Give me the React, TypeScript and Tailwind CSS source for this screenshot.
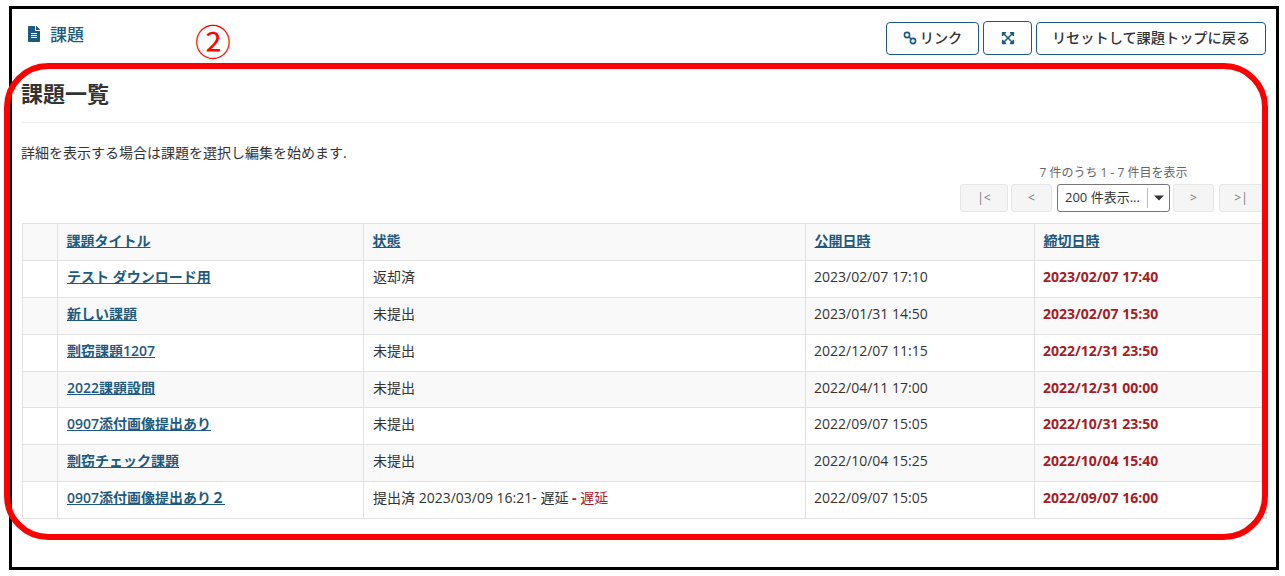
import React from 'react';
import { FaExpandArrowsAlt, FaFileAlt } from 'react-icons/fa';
import { IoMdArrowDropdown } from 'react-icons/io';

const rows = [
  { title: 'テスト ダウンロード用', status: '返却済', open: '2023/02/07 17:10', due: '2023/02/07 17:40' },
  { title: '新しい課題', status: '未提出', open: '2023/01/31 14:50', due: '2023/02/07 15:30' },
  { title: '剽窃課題1207', status: '未提出', open: '2022/12/07 11:15', due: '2022/12/31 23:50' },
  { title: '2022課題設問', status: '未提出', open: '2022/04/11 17:00', due: '2022/12/31 00:00' },
  { title: '0907添付画像提出あり', status: '未提出', open: '2022/09/07 15:05', due: '2022/10/31 23:50' },
  { title: '剽窃チェック課題', status: '未提出', open: '2022/10/04 15:25', due: '2022/10/04 15:40' },
  { title: '0907添付画像提出あり２', status: '提出済 2023/03/09 16:21- 遅延', late: true, open: '2022/09/07 15:05', due: '2022/09/07 16:00' },
];

function PagerButton({ label, width }: { label: string; width: string }) {
  return (
    <button className={`h-[28px] ${width} bg-[#f5f5f5] border border-[#e6e6e6] rounded-[3px] text-[12px] text-[#777]`}>
      {label}
    </button>
  );
}

export default function App() {
  return (
    <div className="relative w-[1285px] h-[576px] bg-white pl-[9px] pt-[6px] text-[#333] font-['Open_Sans','Noto_Sans_CJK_JP',sans-serif] overflow-hidden">
      <div className="w-[1270px] h-[564px] border-[3px] border-black px-[10px]">
        {/* ツールバー */}
        <div className="flex justify-between h-[46px] pt-[12px]">
          <div className="flex items-start gap-[9px] pl-[4px] pt-[3px] text-[17px] font-medium text-[#1d5a7d]">
            <FaFileAlt className="mt-[2px]" size={16} />
            <span className="leading-[22px] -ml-px">課題</span>
          </div>
          <div className="flex items-start gap-[4px] text-[14.2px] text-[#333]">
            <button className="mt-[1px] flex items-center justify-center gap-[3px] w-[93px] h-[33px] pb-[2px] border border-[#1d5a7d] rounded-[4px] font-medium">
              <svg width="14" height="14" viewBox="0 0 14 14" fill="none" stroke="#1d5a7d" strokeWidth="1.6">
                <circle cx="4" cy="4" r="2.6" />
                <circle cx="10" cy="10" r="2.6" />
                <path d="M6 6l2 2" />
              </svg>
              リンク
            </button>
            <button className="flex items-center justify-center w-[49px] h-[34px] border border-[#1d5a7d] rounded-[4px]">
              <FaExpandArrowsAlt size={14} className="text-[#1d5a7d]" />
            </button>
            <button className="mt-[1px] w-[230px] h-[33px] pb-[2px] border border-[#1d5a7d] rounded-[4px] font-medium">
              リセットして課題トップに戻る
            </button>
          </div>
        </div>

        <h2 className="mt-[23px] -ml-px text-[22px] leading-[30px] font-bold">課題一覧</h2>
        <div className="mt-[14px] border-t border-[#eeeeee]" />
        <p className="mt-[20px] -ml-px text-[14px] leading-[20px]">詳細を表示する場合は課題を選択し編集を始めます.</p>

        {/* ページャー */}
        <div className="flex flex-col items-end pr-[3px] mt-[1px]">
          <div className="w-[299px] text-center text-[12px] leading-[18px] text-[#666]">7 件のうち 1 - 7 件目を表示</div>
          <div className="mt-[2px] flex items-center">
            <PagerButton label="|<" width="w-[48px]" />
            <div className="w-[3px]" />
            <PagerButton label="<" width="w-[41px]" />
            <div className="w-[5px]" />
            <div className="flex items-center w-[113px] h-[28px] border border-[#777] rounded-[3px] pl-[7px] text-[13px]">
              <span className="flex-1 whitespace-nowrap">200 件表示...</span>
              <span className="flex items-center justify-center w-[22px] h-[20px] border-l border-[#bbb]">
                <IoMdArrowDropdown size={20} />
              </span>
            </div>
            <div className="w-[3px]" />
            <PagerButton label=">" width="w-[41px]" />
            <div className="w-[5px]" />
            <PagerButton label=">|" width="w-[44px]" />
          </div>
        </div>

        {/* 課題テーブル */}
        <table className="mt-[11px] w-[1244px] table-fixed border-collapse text-[14px]">
          <colgroup>
            <col className="w-[35px]" />
            <col className="w-[306px]" />
            <col className="w-[442px]" />
            <col className="w-[229px]" />
            <col className="w-[232px]" />
          </colgroup>
          <thead>
            <tr className="h-[36.9px] bg-[#f9f9f9] text-left">
              <th className="border border-[#e2e2e2]" />
              {['課題タイトル', '状態', '公開日時', '締切日時'].map((label) => (
                <th key={label} className="border border-[#e2e2e2] pl-[8.5px] pb-[3px] font-semibold">
                  <a className="text-[#1d5a7d] underline">{label}</a>
                </th>
              ))}
            </tr>
          </thead>
          <tbody>
            {rows.map((row, i) => (
              <tr key={row.title} className={`h-[36.9px] ${i % 2 === 1 ? 'bg-[#f9f9f9]' : 'bg-white'}`}>
                <td className="border border-[#e2e2e2]" />
                <td className="border border-[#e2e2e2] pl-[9px] pb-[5px] font-semibold">
                  <a className="text-[#1d5a7d] underline">{row.title}</a>
                </td>
                <td className="border border-[#e2e2e2] pl-[9px] pb-[5px]">
                  {row.status}
                  {row.late && <span className="text-[#b0182b]"> <b>-</b> 遅延</span>}
                </td>
                <td className="border border-[#e2e2e2] pl-[8px] pb-[5px]">{row.open}</td>
                <td className="border border-[#e2e2e2] pl-[8px] pb-[5px] font-bold text-[#a51c24]">{row.due}</td>
              </tr>
            ))}
          </tbody>
        </table>
      </div>

      {/* 赤枠の注記 */}
      <div className="absolute left-[4px] top-[63px] w-[1264px] h-[477px] border-[6px] border-[#ff0000] rounded-[44px] pointer-events-none" />
      <div className="absolute left-[194px] top-[20px] w-[38px] text-center text-[36px] leading-[48px] text-[#ff0000] font-['Liberation_Serif','Noto_Sans_CJK_JP',serif]">②</div>
    </div>
  );
}
